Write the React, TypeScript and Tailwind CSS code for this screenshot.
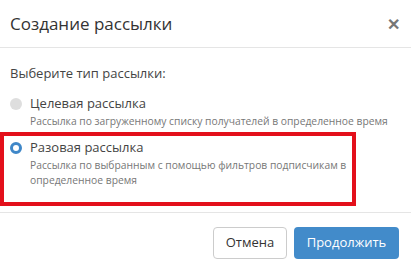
import { useState } from "react";

const font = { fontFamily: '"Open Sans", "Noto Sans", sans-serif' };

function Radio({ checked }: { checked: boolean }) {
  if (checked) {
    return (
      <span className="mt-[4px] box-border h-[12px] w-[12px] shrink-0 rounded-full border-[3px] border-[#3f87c8] bg-white" />
    );
  }
  return <span className="mt-[4px] h-[12px] w-[12px] shrink-0 rounded-full bg-[#dedede]" />;
}

export default function App() {
  const [type, setType] = useState<"target" | "once">("once");

  return (
    <div className="h-[265px] w-[411px] overflow-hidden bg-white text-[#333]" style={font}>
      <div className="flex h-[48px] items-center justify-between border-b border-[#e5e5e5] pl-[10px] pr-[11px]">
        <h3 className="text-[17px] font-normal leading-none text-[#333]">Создание рассылки</h3>
        <button type="button" className="text-[16px] font-bold leading-none text-[#777]">
          ✕
        </button>
      </div>

      <div className="px-[10px] pt-[16px]">
        <p className="text-[13px] leading-[18px] text-[#444]">Выберите тип рассылки:</p>

        <div className="mt-[12px] flex gap-[8px]" onClick={() => setType("target")}>
          <Radio checked={type === "target"} />
          <div>
            <div className="text-[13px] leading-[18px] text-[#444]">Целевая рассылка</div>
            <div className="mt-[2px] text-[10.3px] leading-[15px] text-[#777]">
              Рассылка по загруженному списку получателей в определенное время
            </div>
          </div>
        </div>

        <div
          className="ml-[-10px] mt-[3px] flex h-[74px] w-[356px] gap-[8px] border-[4px] border-[#e3101b] pl-[6px] pt-[2px]"
          onClick={() => setType("once")}
        >
          <Radio checked={type === "once"} />
          <div>
            <div className="text-[13px] leading-[18px] text-[#444]">Разовая рассылка</div>
            <div className="mt-[2px] text-[10.3px] leading-[15px] text-[#777]">
              Рассылка по выбранным с помощью фильтров подписчикам в определенное время
            </div>
          </div>
        </div>
      </div>

      <div className="mt-[6px] flex justify-end gap-[7px] border-t border-[#e5e5e5] pr-[12px] pt-[14px]">
        <button
          type="button"
          className="h-[32px] w-[74px] rounded-[4px] border border-[#ccc] bg-white text-[13px] text-[#333]"
        >
          Отмена
        </button>
        <button
          type="button"
          className="h-[32px] w-[105px] rounded-[4px] bg-[#428bca] text-[13px] text-white"
        >
          Продолжить
        </button>
      </div>
    </div>
  );
}
